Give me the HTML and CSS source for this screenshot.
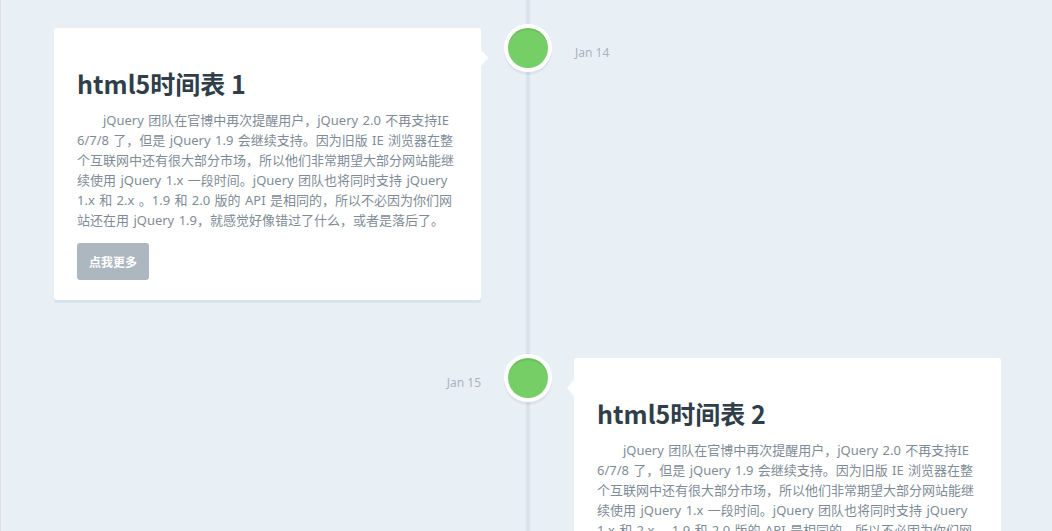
FILE: index.html
```html
<!DOCTYPE html>
<html lang="zh-CN">
<head>
<meta charset="utf-8">
<title>html5时间表</title>
<link rel="stylesheet" href="styles.css">
</head>
<body>
<section class="timeline">
  <div class="block">
    <div class="content content-left">
      <h2>html5时间表 1</h2>
      <p>jQuery 团队在官博中再次提醒用户，jQuery 2.0 不再支持IE 6/7/8 了，但是 jQuery 1.9 会继续支持。因为旧版 IE 浏览器在整个互联网中还有很大部分市场，所以他们非常期望大部分网站能继续使用 jQuery 1.x 一段时间。jQuery 团队也将同时支持 jQuery 1.x 和 2.x 。1.9 和 2.0 版的 API 是相同的，所以不必因为你们网站还在用 jQuery 1.9，就感觉好像错过了什么，或者是落后了。</p>
      <a class="btn" href="#">点我更多</a>
    </div>
    <div class="node"><span class="dot"></span></div>
    <span class="date date-right">Jan 14</span>
  </div>
  <div class="block">
    <span class="date date-left">Jan 15</span>
    <div class="node"><span class="dot"></span></div>
    <div class="content content-right">
      <h2>html5时间表 2</h2>
      <p>jQuery 团队在官博中再次提醒用户，jQuery 2.0 不再支持IE 6/7/8 了，但是 jQuery 1.9 会继续支持。因为旧版 IE 浏览器在整个互联网中还有很大部分市场，所以他们非常期望大部分网站能继续使用 jQuery 1.x 一段时间。jQuery 团队也将同时支持 jQuery 1.x 和 2.x 。1.9 和 2.0 版的 API 是相同的，所以不必因为你们网站还在用 jQuery 1.9，就感觉好像错过了什么，或者是落后了。</p>
      <a class="btn" href="#">点我更多</a>
    </div>
  </div>
</section>
</body>
</html>
```

FILE: styles.css
```css
html, body {
  margin: 0;
  padding: 0;
  background: #e9f0f5;
}
body {
  border-left: 1px solid #dbe0e4;
  min-height: 531px;
  box-sizing: border-box;
  font-family: "Noto Sans", "Noto Sans CJK SC", sans-serif;
  overflow: hidden;
}
.timeline {
  position: relative;
  width: 947px;
  margin-left: 53px;
  padding-top: 28px;
  padding-bottom: 40px;
  min-height: 600px;
}
.timeline::before {
  content: "";
  position: absolute;
  top: 0;
  bottom: 0;
  left: 50%;
  width: 4px;
  margin-left: -2px;
  background: #d7e4ed;
}
.block {
  position: relative;
  display: grid;
  grid-template-columns: 427px 1fr 427px;
  align-items: start;
}
.block + .block {
  margin-top: 58px;
}
.content {
  position: relative;
  background: #fff;
  border-radius: 3px;
  box-shadow: 0 3px 0 #d7e4ed;
  padding: 40px 23px 20px;
}
.content::before {
  content: "";
  position: absolute;
  top: 22px;
  width: 0;
  height: 0;
  border-top: 8px solid transparent;
  border-bottom: 8px solid transparent;
}
.content-left::before {
  left: 100%;
  border-left: 7px solid #fff;
}
.content-right::before {
  right: 100%;
  border-right: 7px solid #fff;
}
.content h2 {
  margin: 0 0 11px;
  font-family: "Noto Sans CJK SC", "Noto Sans", sans-serif;
  font-size: 25px;
  line-height: 31px;
  font-weight: 700;
  color: #303e49;
}
.content p {
  margin: 0;
  font-size: 13px;
  line-height: 20px;
  text-indent: 2em;
  word-spacing: 1px;
  color: #7f8c97;
}
.btn {
  display: inline-block;
  margin-top: 13px;
  height: 37px;
  line-height: 37px;
  padding: 0 12px;
  background: #acb7c0;
  color: #fff;
  border-radius: 3px;
  font-family: "Noto Sans CJK SC", sans-serif;
  font-size: 12px;
  font-weight: 700;
  text-decoration: none;
}
.node {
  display: flex;
  justify-content: center;
  margin-top: -4px;
  position: relative;
  z-index: 1;
}
.dot {
  width: 40px;
  height: 40px;
  border-radius: 50%;
  background: #75ce66;
  box-shadow: 0 0 0 4px #fff, inset 0 2px 0 rgba(0, 0, 0, 0.08), 0 3px 0 4px rgba(0, 0, 0, 0.05);
  margin-top: 4px;
}
.date {
  margin-top: 15px;
  padding-left: 1px;
  font-size: 12px;
  line-height: 20px;
  color: #a9b3bc;
}
.date-left {
  text-align: right;
  padding-left: 0;
}
```
